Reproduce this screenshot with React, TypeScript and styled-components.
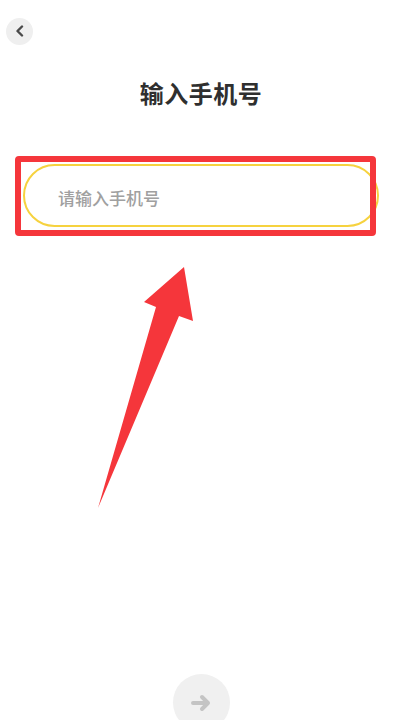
import React from "react";
import styled, { createGlobalStyle } from "styled-components";

const GlobalStyle = createGlobalStyle`
	html, body {
		margin: 0;
		padding: 0;
		background: #ffffff;
	}
	body {
		font-family: "Noto Sans CJK SC", "Noto Sans", sans-serif;
	}
`;

const App = () => {
	return (
		<Page>
			<GlobalStyle />
			<TopBar>
				<BackButton aria-label="返回">
					<svg width="12" height="12" viewBox="0 0 12 12">
						<path d="M8 1.5 L3.5 6 L8 10.5" fill="none" stroke="#4a4a4a" strokeWidth="2.4" strokeLinecap="round" strokeLinejoin="round" />
					</svg>
				</BackButton>
			</TopBar>
			<Title>输入手机号</Title>
			<InputArea>
				<PhoneInput type="tel" placeholder="请输入手机号" />
				<HighlightBox />
			</InputArea>
			<Footer>
				<NextButton aria-label="下一步">
					<svg width="22" height="18" viewBox="0 0 22 18">
						<path d="M2 9 H17 M11 3 L17 9 L11 15" fill="none" stroke="#c4c4c4" strokeWidth="4" strokeLinecap="round" strokeLinejoin="round" />
					</svg>
				</NextButton>
			</Footer>
			<PointerArrow width="402" height="720" viewBox="0 0 402 720">
				<polygon points="98,508 179,316 193,321 184,267 144,302 156,307" fill="#f5363b" />
			</PointerArrow>
		</Page>
	);
};

export default App;

const Page = styled.div`
	position: relative;
	width: 402px;
	height: 720px;
	overflow: hidden;
	display: flex;
	flex-direction: column;
	background: #ffffff;
`;

const TopBar = styled.div`
	display: flex;
	align-items: center;
	height: 28px;
	padding: 17px 0 0 6px;
`;

const BackButton = styled.button`
	width: 27px;
	height: 27px;
	border-radius: 50%;
	border: none;
	padding: 0;
	background: #efefef;
	display: flex;
	align-items: center;
	justify-content: center;
	cursor: pointer;
`;

const Title = styled.h1`
	margin: 31px 0 0;
	text-align: center;
	font-size: 24px;
	line-height: 34px;
	font-weight: 700;
	letter-spacing: 0.5px;
	color: #2f2f2f;
`;

const InputArea = styled.div`
	position: relative;
	margin: 54px 0 0 23px;
	width: 356px;
`;

const PhoneInput = styled.input`
	box-sizing: border-box;
	width: 100%;
	height: 63px;
	border: 2px solid #f6d23f;
	border-radius: 32px;
	padding: 3px 0 0 33px;
	outline: none;
	font-family: "Noto Sans CJK SC", "Noto Sans", sans-serif;
	font-size: 17px;
	font-weight: 500;
	color: #333;
	background: transparent;
	&::placeholder {
		color: #a0a0a0;
	}
`;

const HighlightBox = styled.div`
	position: absolute;
	left: -8px;
	top: -8px;
	width: 349px;
	height: 68px;
	border: 6px solid #f5363b;
	border-radius: 4px;
	pointer-events: none;
`;

const Footer = styled.div`
	margin-top: auto;
	margin-bottom: -11px;
	display: flex;
	justify-content: center;
	padding-left: 1px;
`;

const NextButton = styled.button`
	width: 57px;
	height: 57px;
	border-radius: 50%;
	border: none;
	padding: 0;
	background: #f0f0f0;
	display: flex;
	align-items: center;
	justify-content: center;
`;

const PointerArrow = styled.svg`
	position: absolute;
	left: 0;
	top: 0;
	pointer-events: none;
`;
